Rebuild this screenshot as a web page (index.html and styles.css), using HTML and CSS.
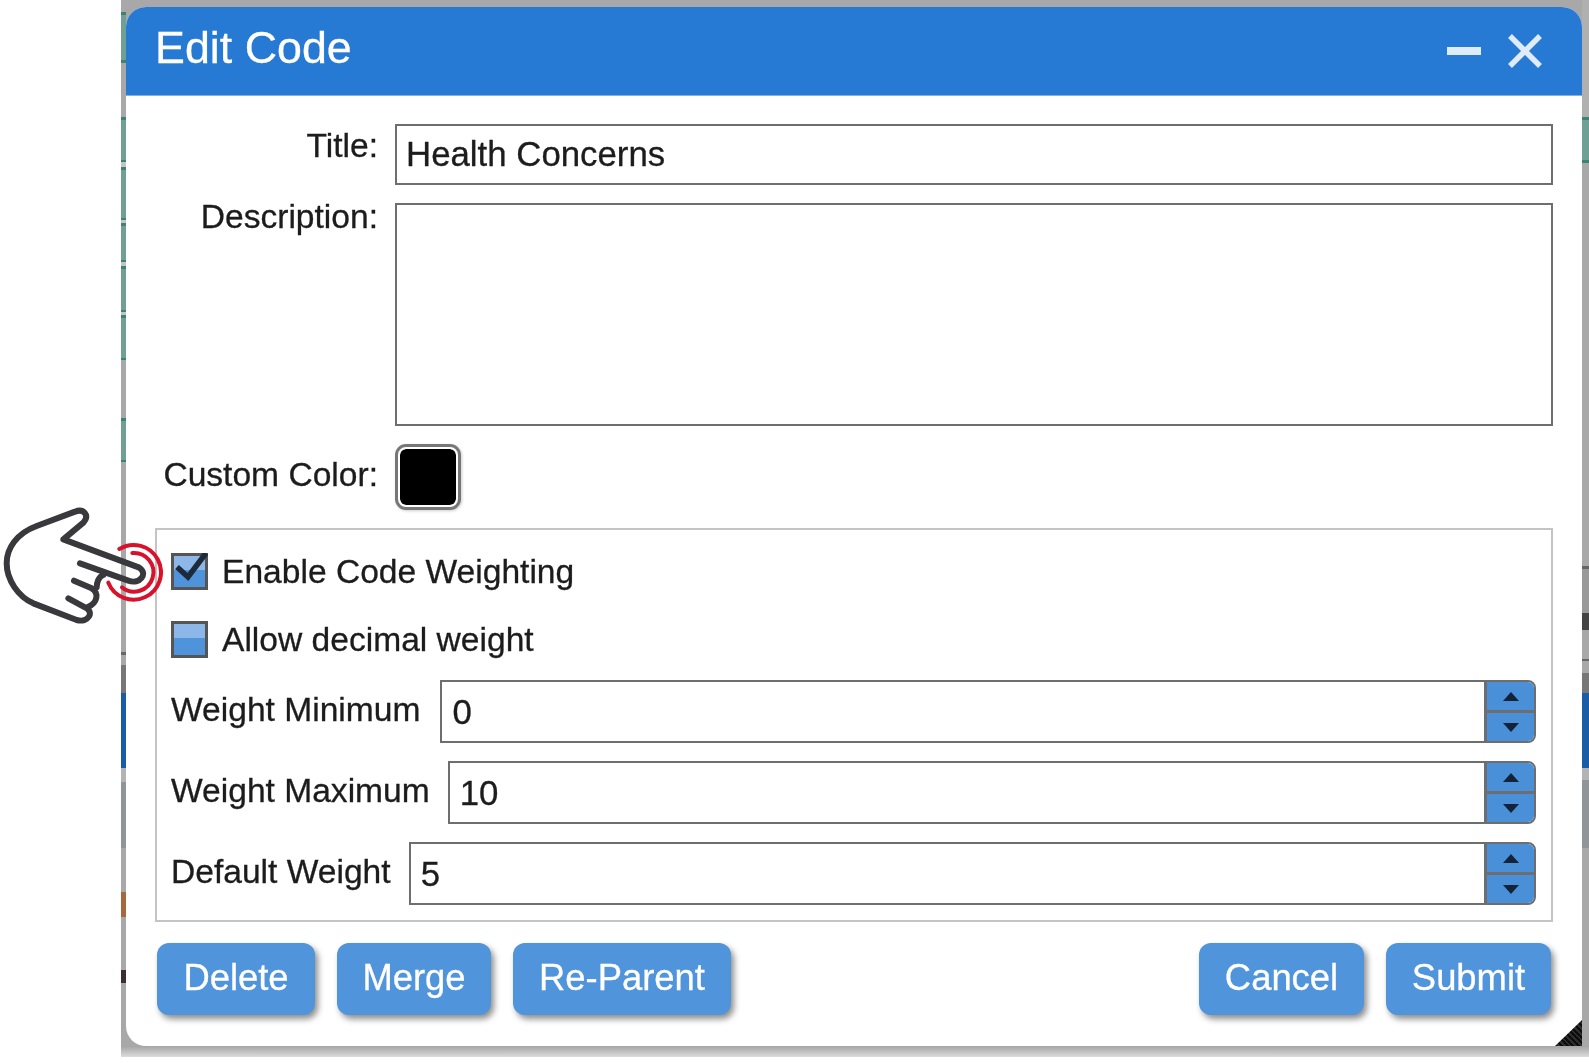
FILE: index.html
```html
<!DOCTYPE html>
<html lang="en">
<head>
  <meta charset="UTF-8" />
  <title>Edit Code</title>
  <link rel="stylesheet" href="styles.css">
</head>
<body>
  <div class="backdrop">
    <div class="dialog">
      <div class="dialog-header">
        <span class="dialog-title">Edit Code</span>
        <svg class="header-icons" viewBox="0 0 100 40" fill="none" stroke="#dfebf9">
          <path d="M0 20H34" stroke-width="8" />
          <path d="M63 5L93 35M93 5L63 35" stroke-width="5.5" />
        </svg>
      </div>

      <div class="dialog-body">
        <div class="form-row row-title">
          <label class="row-label">Title:</label>
          <div class="text-box title-box">Health Concerns</div>
        </div>
        <div class="form-row row-desc">
          <label class="row-label">Description:</label>
          <div class="text-box desc-box"></div>
        </div>
        <div class="form-row row-color">
          <label class="row-label">Custom Color:</label>
          <div class="swatch"></div>
        </div>

        <div class="weight-box">
          <div class="check-row">
            <span class="check">
              <svg viewBox="0 0 37 37" fill="none" stroke="#1c2a3c" stroke-width="5.5">
                <path d="M6 14L17 24L35 0" />
              </svg>
            </span>
            Enable Code Weighting
          </div>
          <div class="check-row second">
            <span class="check"></span>
            Allow decimal weight
          </div>

          <div class="spin-row first">
            <label>Weight Minimum</label>
            <div class="spin-input">
              <span class="spin-value">0</span>
              <div class="spin-btns"><span class="spin-up"></span><span class="spin-down"></span></div>
            </div>
          </div>
          <div class="spin-row">
            <label>Weight Maximum</label>
            <div class="spin-input">
              <span class="spin-value">10</span>
              <div class="spin-btns"><span class="spin-up"></span><span class="spin-down"></span></div>
            </div>
          </div>
          <div class="spin-row">
            <label>Default Weight</label>
            <div class="spin-input">
              <span class="spin-value">5</span>
              <div class="spin-btns"><span class="spin-up"></span><span class="spin-down"></span></div>
            </div>
          </div>
        </div>

        <div class="button-row">
          <button class="btn btn-delete">Delete</button>
          <button class="btn btn-merge">Merge</button>
          <button class="btn btn-parent">Re-Parent</button>
          <button class="btn btn-cancel">Cancel</button>
          <button class="btn btn-submit">Submit</button>
        </div>
      </div>

      <div class="resize-grip"></div>
    </div>
  </div>

  <!-- pointer drawn over the dialog -->
  <svg class="hand" viewBox="0 0 900 600" fill="none" stroke-linecap="round" stroke-linejoin="round">
    <g stroke="#38383d" stroke-width="18">
      <path d="M240 250L385 302C420 315 445 280 418 263L190 178L250 128C270 105 250 85 225 95L110 138C50 160 20 205 20 250C20 300 55 350 100 370L230 420C265 430 285 395 255 382L205 355" />
      <path d="M222 302L275 325C300 340 290 370 265 380" />
      <path d="M310 285C295 290 290 310 290 322" />
    </g>
    <g stroke="#d9122b" stroke-width="12">
      <path d="M358 207A82 82 0 1 1 325 308" />
      <path d="M397 219A58 58 0 1 1 366 322" />
    </g>
  </svg>
</body>
</html>
```

FILE: styles.css
```css
body {
  margin: 0;
  width: 1589px;
  height: 1063px;
  overflow: hidden;
  background-color: #fff;
  font-family: "Liberation Sans", Arial, sans-serif;
  color: #1c1c1c;
  -webkit-text-stroke: 0.3px currentColor;
}
/* the page behind the dialog only shows as thin strips */
.backdrop {
  margin-left: 121px;
  height: 1057px;
  box-sizing: border-box;
  padding: 7px 7px 11px 5px;
  background:
    linear-gradient(#a4a4a4, #dcdcdc) left bottom / 100% 11px no-repeat,
    linear-gradient(#a8a8a8 0 12px, #3f8272 12px 15px, #6f9f95 15px 60px, #3f8272 60px 63px, #a8a8a8 63px 117px,
      #3f8272 117px 120px, #6f9f95 120px 160px, #3f8272 160px 162px, #c4c4c4 162px 167px,
      #3f8272 167px 170px, #6f9f95 170px 218px, #3f8272 218px 220px, #c4c4c4 220px 223px,
      #3f8272 223px 226px, #6f9f95 226px 260px, #3f8272 260px 262px, #c4c4c4 262px 266px,
      #3f8272 266px 269px, #6f9f95 269px 310px, #3f8272 310px 312px, #c4c4c4 312px 315px,
      #3f8272 315px 318px, #6f9f95 318px 358px, #3f8272 358px 360px, #a8a8a8 360px 418px,
      #3f8272 418px 421px, #6f9f95 421px 460px, #3f8272 460px 462px, #a8a8a8 462px 652px,
      #666 652px 655px, #a8a8a8 655px 665px, #777 665px 693px,
      #1a5ca5 693px 768px, #b4b4b4 768px 782px, #8f9598 782px 848px, #a8a8a8 848px 892px,
      #a5683f 892px 917px, #a8a8a8 917px 970px, #3a3030 970px 983px, #a8a8a8 983px) left top / 5px 100% no-repeat,
    linear-gradient(#b0b0b0 0 117px, #3f8272 117px 120px, #6f9f95 120px 160px, #3f8272 160px 163px, #a8a8a8 163px 566px,
      #666 566px 569px, #999 569px 613px, #444 613px 630px, #a8a8a8 630px 659px, #666 659px 661px, #a8a8a8 661px 673px,
      #777 673px 693px, #1a5ca5 693px 768px, #b4b4b4 768px 780px, #8f9598 780px 848px, #a8a8a8 848px) right top / 7px 100% no-repeat,
    #a8a8a8;
  filter: blur(0.7px);
}
.dialog {
  position: relative;
  height: 100%;
  background-color: #fff;
  border-radius: 20px 20px 0 20px;
}
.dialog-header {
  height: 89px;
  box-sizing: border-box;
  display: flex;
  align-items: center;
  justify-content: space-between;
  padding: 0 35px 0 29px;
  background-color: #267ad3;
  border-bottom: 1px solid #7fb2e8;
  border-radius: 20px 20px 0 0;
  color: #fff;
}
.dialog-title {
  font-size: 44.8px;
  margin-top: -8px;
}
.header-icons {
  width: 100px;
  height: 40px;
}
.dialog-body {
  padding: 28px 29px 0 29px;
}
.form-row {
  display: flex;
  gap: 17px;
  font-size: 33.6px;
}
.row-label {
  width: 223px;
  text-align: right;
}
.row-title {
  height: 61px;
}
.row-title .row-label {
  padding-top: 3px;
}
.row-desc {
  margin-top: 18px;
  height: 223px;
}
.row-desc .row-label {
  margin-top: -5px;
}
.row-color {
  margin-top: 17px;
  height: 67px;
  align-items: center;
}
.row-color .row-label {
  padding-bottom: 4px;
}
.text-box {
  flex: 1;
  box-sizing: border-box;
  border: 2px solid #6e6e6e;
  padding: 0 9px;
  font-size: 34.8px;
}
.title-box {
  line-height: 55px;
}
.swatch {
  box-sizing: border-box;
  width: 60px;
  height: 60px;
  margin: 0 0 0 3px;
  background-color: #000;
  background-clip: padding-box;
  border: 2px solid #fff;
  border-radius: 8px;
  box-shadow: 0 0 0 3px #777, 1px 1px 3px 3px rgba(0, 0, 0, 0.2);
}
.weight-box {
  margin-top: 18px;
  box-sizing: border-box;
  height: 394px;
  border: 2px solid #c4c4c4;
  padding: 23px 15px 0 14px;
  font-size: 33.6px;
}
.check-row {
  display: flex;
  align-items: center;
  gap: 14px;
  height: 37px;
}
.check-row.second {
  margin-top: 31px;
}
.check {
  position: relative;
  box-sizing: border-box;
  width: 37px;
  height: 37px;
  border: 3px solid #555;
  background: linear-gradient(#8db7e8 0 46%, #4f93db 46%);
}
.check svg {
  position: absolute;
  top: -3px;
  left: -3px;
  width: 37px;
  height: 37px;
}
.spin-row {
  display: flex;
  align-items: center;
  gap: 18px;
  height: 63px;
  margin-top: 18px;
}
.spin-row.first {
  gap: 20px;
  margin-top: 22px;
}
.spin-row label {
  padding-bottom: 4px;
}
.spin-input {
  flex: 1;
  height: 63px;
  box-sizing: border-box;
  display: flex;
  border: 2px solid #6e6e6e;
  border-radius: 0 8px 8px 0;
  overflow: hidden;
}
.spin-value {
  flex: 1;
  padding: 0 9px 0 10px;
  font-size: 34.8px;
  line-height: 60px;
}
.spin-btns {
  width: 47px;
  display: flex;
  flex-direction: column;
  border-left: 3px solid #6e6e6e;
  background-color: #4a90d9;
}
.spin-up,
.spin-down {
  flex: 1;
  display: flex;
  align-items: center;
  justify-content: center;
}
.spin-up {
  border-bottom: 3px solid #6e6e6e;
}
.spin-up::before {
  content: "";
  border: 8px solid transparent;
  border-top: 0;
  border-bottom: 9px solid #15233a;
}
.spin-down::before {
  content: "";
  border: 8px solid transparent;
  border-bottom: 0;
  border-top: 9px solid #15233a;
}
.button-row {
  margin-top: 21px;
  display: flex;
  gap: 22px;
  padding-left: 2px;
}
.btn {
  height: 72px;
  padding: 0 0 2px;
  border: none;
  border-radius: 12px;
  background-color: #5094db;
  color: #fff;
  font-family: inherit;
  font-size: 36.4px;
  box-shadow: 3px 4px 6px rgba(0, 0, 0, 0.45);
}
.btn-delete { width: 158px; }
.btn-merge { width: 154px; }
.btn-parent { width: 218px; }
.btn-cancel { width: 165px; margin-left: auto; }
.btn-submit { width: 165px; margin-right: 2px; }
.resize-grip {
  position: absolute;
  right: 0;
  bottom: 0;
  width: 27px;
  height: 26px;
  background: repeating-linear-gradient(45deg, #0c0c0c 0 2px, #2e2e2e 2px 4px);
  clip-path: polygon(100% 0, 100% 100%, 0 100%);
}
.hand {
  position: absolute;
  left: 0;
  top: 480px;
  width: 300px;
  height: 200px;
  filter: blur(0.4px);
}
```
